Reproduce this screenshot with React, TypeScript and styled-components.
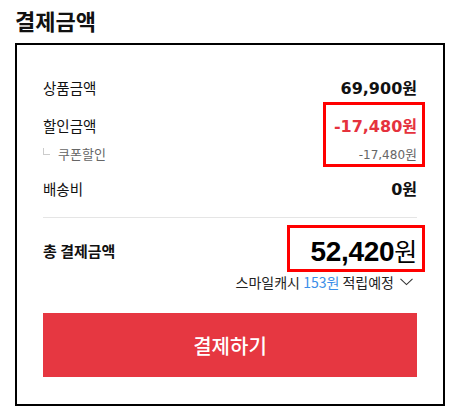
import styled, { createGlobalStyle } from 'styled-components';

const GlobalStyle = createGlobalStyle`
  body {
    margin: 0;
    background: #fff;
    font-family: "Noto Sans CJK KR", "Noto Sans", sans-serif;
    color: #111;
  }
`;

const Wrapper = styled.div`
  padding: 5px 0 0 15px;
  width: 430px;
`;

const Title = styled.h2`
  margin: 0;
  font-size: 22px;
  font-weight: 700;
  line-height: 30px;
  color: #111;
`;

const Panel = styled.div`
  margin-top: 8px;
  border: 2px solid #000;
  padding: 30px 26px 27px;
  display: flex;
  flex-direction: column;
`;

const Row = styled.div<{ $gap?: number; $height?: number }>`
  display: flex;
  justify-content: space-between;
  align-items: center;
  height: ${(p) => p.$height ?? 24}px;
  margin-top: ${(p) => p.$gap ?? 0}px;
`;

const Label = styled.span<{ $bold?: boolean }>`
  font-size: ${(p) => (p.$bold ? 15 : 14.5)}px;
  font-weight: ${(p) => (p.$bold ? 700 : 400)};
  color: #111;
`;

const SubLabel = styled.span`
  display: flex;
  align-items: center;
  font-size: 13px;
  color: #666;
`;

const Corner = styled.i`
  display: inline-block;
  width: 6px;
  height: 6px;
  margin: 0 8px 4px 0;
  border-left: 1px solid #ccc;
  border-bottom: 1px solid #ccc;
`;

const Amount = styled.span<{ $color?: string }>`
  font-family: "DejaVu Sans", sans-serif;
  font-size: 16px;
  font-weight: 700;
  color: ${(p) => p.$color ?? '#111'};
`;

const Won = styled.span<{ $size?: number; $weight?: number }>`
  font-family: "Noto Sans CJK KR", sans-serif;
  font-size: ${(p) => p.$size ?? 16}px;
  font-weight: ${(p) => p.$weight ?? 700};
`;

const SubAmount = styled.span`
  font-family: "DejaVu Sans", sans-serif;
  font-size: 12px;
  color: #666;
`;

const Divider = styled.hr`
  margin: 17px 0 0;
  border: 0;
  border-top: 1px solid #e5e5e5;
`;

const Total = styled.span`
  font-family: "Liberation Sans", Arial, sans-serif;
  font-size: 28px;
  font-weight: 700;
  letter-spacing: -0.3px;
  color: #000;
`;

const Cash = styled.div`
  display: flex;
  justify-content: flex-end;
  align-items: center;
  height: 18px;
  margin-top: 7px;
  font-size: 14px;
  color: #222;
  white-space: pre;

  em {
    font-style: normal;
    color: #3b8ee8;
  }

  svg {
    margin-left: 6px;
    margin-right: 4px;
  }
`;

const PayButton = styled.button`
  margin-top: 22px;
  height: 64px;
  width: 100%;
  border: 0;
  background: #e63741;
  color: #fff;
  font-family: "Noto Sans CJK KR", sans-serif;
  font-size: 20px;
  font-weight: 500;
  cursor: pointer;
`;

const Highlighted = styled.div`
  position: relative;
`;

// 리뷰용 빨간 표시 박스
const Marker = styled.div<{ $top: number; $left: number; $w: number; $h: number }>`
  position: absolute;
  top: ${(p) => p.$top}px;
  left: ${(p) => p.$left}px;
  width: ${(p) => p.$w}px;
  height: ${(p) => p.$h}px;
  border: 3px solid #ff0000;
  box-sizing: border-box;
  pointer-events: none;
`;

function App() {
  return (
    <Wrapper>
      <GlobalStyle />
      <Title>결제금액</Title>
      <Highlighted>
        <Panel>
          <Row>
            <Label>상품금액</Label>
            <Amount>
              69,900<Won>원</Won>
            </Amount>
          </Row>
          <Row $gap={14}>
            <Label>할인금액</Label>
            <Amount $color="#e5323d">
              -17,480<Won>원</Won>
            </Amount>
          </Row>
          <Row $gap={7} $height={18}>
            <SubLabel>
              <Corner />
              쿠폰할인
            </SubLabel>
            <SubAmount>
              -17,480<Won $size={13} $weight={400}>원</Won>
            </SubAmount>
          </Row>
          <Row $gap={14}>
            <Label>배송비</Label>
            <Amount>
              0<Won>원</Won>
            </Amount>
          </Row>
          <Divider />
          <Row $gap={16} $height={32}>
            <Label $bold>총 결제금액</Label>
            <Total>
              52,420<Won $size={25} $weight={400}>원</Won>
            </Total>
          </Row>
          <Cash>
            스마일캐시 <em>153원</em> 적립예정
            <svg width="13" height="8" viewBox="0 0 13 8">
              <path d="M0.5 0.8 L6.5 6.6 L12.5 0.8" fill="none" stroke="#333" strokeWidth="1.1" />
            </svg>
          </Cash>
          <PayButton>결제하기</PayButton>
        </Panel>
        <Marker $top={59} $left={308} $w={102} $h={65} />
        <Marker $top={182} $left={272} $w={138} $h={47} />
      </Highlighted>
    </Wrapper>
  );
}

export default App;
